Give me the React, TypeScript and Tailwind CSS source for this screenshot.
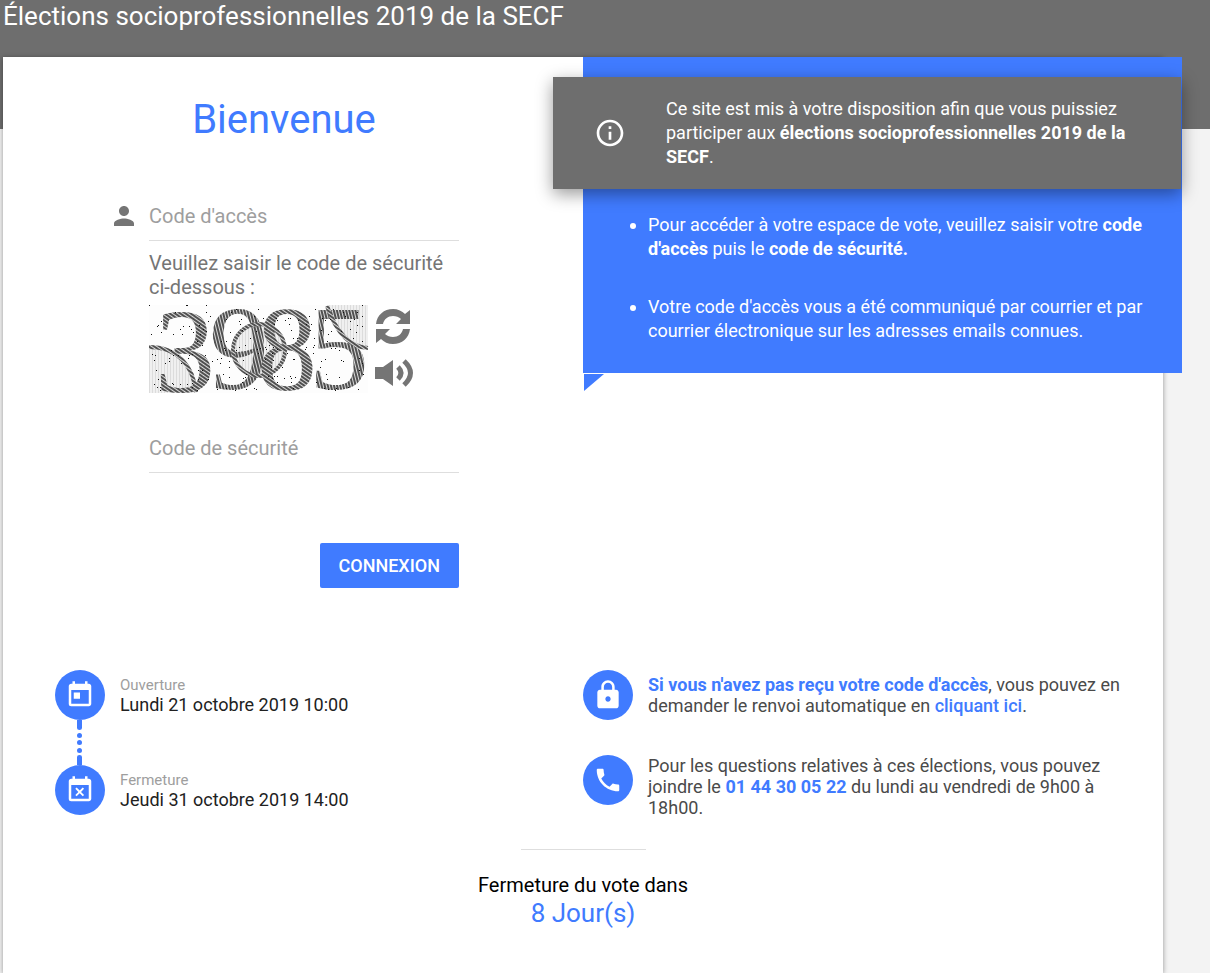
import React from "react";
import {
  MdPerson,
  MdInfoOutline,
  MdLock,
  MdPhone,
  MdToday,
  MdEventBusy,
} from "react-icons/md";

const specks = Array.from({ length: 190 }, (_, i) => ({
  x: (i * 83 + ((i * i * 7) % 41)) % 218,
  y: (i * 37 + ((i * i * 5) % 29)) % 87,
}));

function Captcha() {
  return (
    <svg
      viewBox="0 0 219 88"
      className="h-[88px] w-[219px] overflow-visible"
      role="img"
      aria-label="Code de sécurité en image"
    >
      <defs>
        <pattern id="slant" width="3" height="3" patternUnits="userSpaceOnUse" patternTransform="rotate(35)">
          <rect width="3" height="3" fill="#dadada" />
          <rect width="3" height="2" fill="#505050" />
        </pattern>
        <pattern id="upright" width="3" height="3" patternUnits="userSpaceOnUse" patternTransform="rotate(-14)">
          <rect width="3" height="3" fill="#dadada" />
          <rect width="2" height="3" fill="#505050" />
        </pattern>
        <pattern id="pale" width="3" height="3" patternUnits="userSpaceOnUse">
          <rect width="3" height="3" fill="#f0f0f0" />
          <rect width="1" height="3" fill="#dcdcdc" />
        </pattern>
      </defs>
      <rect width="219" height="88" fill="#fdfdfd" />
      <path d="M0 42C28 42 44 60 48 88H0Z" fill="url(#pale)" />
      <circle cx="110" cy="45" r="26" fill="url(#pale)" />
      <path d="M178 0H219V43C198 42 186 24 178 0Z" fill="url(#pale)" />
      <g fontFamily="Liberation Serif, serif" fontSize="120">
        <text x="6" y="87" fill="url(#slant)">3</text>
        <text x="60" y="84" fill="url(#upright)">9</text>
        <text x="108" y="85" fill="url(#slant)">8</text>
        <text x="160" y="84" fill="url(#upright)">5</text>
      </g>
      <g fill="none" stroke="url(#slant)" strokeWidth="4">
        <path d="M0 42C28 42 44 60 47 87" />
        <circle cx="110" cy="45" r="26" />
        <path d="M178 1C186 24 198 42 219 43" />
      </g>
      {specks.map((s, i) => (
        <rect key={i} x={s.x} y={s.y} width="1" height="1" fill="#111" />
      ))}
    </svg>
  );
}

function RefreshIcon() {
  return (
    <svg viewBox="0 0 36 36" className="h-9 w-9" fill="#757575">
      <path d="M1 15C2 6 9 0 18 0c5 0 9 2 12 5l5-4v14H21l5-5c-2-2-5-3-8-3-5 0-9 3-10 8Z" />
      <path d="M35 20c-1 9-8 15-17 15-5 0-9-2-12-5l-5 4V20h14l-5 5c2 2 5 3 8 3 5 0 9-3 10-8Z" />
    </svg>
  );
}

function SoundIcon() {
  return (
    <svg viewBox="0 0 38 30" className="h-[30px] w-[38px]" fill="#757575">
      <path d="M0 9h8L18 2v26L8 21H0Z" />
      <path d="M23 9q6 6 0 12M29 3q13 12 0 24" fill="none" stroke="#757575" strokeWidth="5" />
    </svg>
  );
}

function Badge({ children }: { children: React.ReactNode }) {
  return (
    <span className="flex size-[50px] shrink-0 items-center justify-center rounded-full bg-[#407bff] text-white">
      {children}
    </span>
  );
}

function DateRow({ icon, label, value }: { icon: React.ReactNode; label: string; value: string }) {
  return (
    <div className="flex items-center gap-[15px]">
      <Badge>{icon}</Badge>
      <div>
        <p className="text-[15px] leading-5 text-[#9e9e9e]">{label}</p>
        <p className="text-[18px] leading-5 text-[#212121]">{value}</p>
      </div>
    </div>
  );
}

export default function App() {
  return (
    <div className="min-h-screen bg-[#f3f3f3] font-[Roboto,sans-serif]">
      <header className="h-[129px] bg-[#6e6e6e] px-[3px]">
        <h1 className="text-[26px] leading-8 text-white">Élections socioprofessionnelles 2019 de la SECF</h1>
      </header>
      <main className="-mt-[72px] pr-[47px] pl-[3px]">
        <div className="min-h-[calc(100vh-57px)] bg-white pb-11 shadow-[0_1px_5px_rgba(0,0,0,0.4)]">
          <div className="grid grid-cols-2">
            <form className="ml-[106px] max-w-[350px] pt-9" onSubmit={(e) => e.preventDefault()}>
              <h2 className="text-center text-[40px] leading-[54px] text-[#407bff]">Bienvenue</h2>
              <div className="mt-[45px] flex">
                <label htmlFor="access" className="flex h-12 w-10 shrink-0 items-center" aria-label="Code d'accès">
                  <MdPerson className="size-[30px] text-[#757575]" />
                </label>
                <div className="min-w-0 flex-1">
                  <input
                    id="access"
                    type="text"
                    placeholder="Code d'accès"
                    className="h-[49px] w-full border-b border-[#dedede] text-[20px] text-[#424242] outline-none placeholder:text-[#9e9e9e]"
                  />
                  <p className="mt-2.5 text-[20px] leading-6 text-[#757575]">
                    Veuillez saisir le code de sécurité ci-dessous :
                  </p>
                  <div className="mt-1.5 flex gap-[7px]">
                    <Captcha />
                    <div className="flex flex-col gap-[13px] pt-1">
                      <button type="button" aria-label="Changer l'image">
                        <RefreshIcon />
                      </button>
                      <button type="button" aria-label="Écouter le code">
                        <SoundIcon />
                      </button>
                    </div>
                  </div>
                  <input
                    type="text"
                    aria-label="Code de sécurité"
                    placeholder="Code de sécurité"
                    className="mt-[31px] h-[49px] w-full border-b border-[#dedede] text-[20px] text-[#424242] outline-none placeholder:text-[#9e9e9e]"
                  />
                  <div className="mt-[70px] flex justify-end">
                    <button
                      type="submit"
                      className="h-[45px] rounded-[2px] bg-[#407bff] px-[19px] text-[18px] font-medium text-white"
                    >
                      CONNEXION
                    </button>
                  </div>
                </div>
              </div>
            </form>
            <section className="relative -mr-[19px] self-start bg-[#407bff] pt-5 pb-[30px] text-[18px] leading-6 text-white">
              <div className="mr-px -ml-[30px] flex items-center gap-10 bg-[#6e6e6e] py-5 pr-12 pl-[41px] shadow-[0_5px_16px_rgba(0,0,0,0.4)]">
                <MdInfoOutline className="size-8 shrink-0" />
                <p>
                  Ce site est mis à votre disposition afin que vous puissiez participer aux{" "}
                  <b>élections socioprofessionnelles 2019 de la SECF</b>.
                </p>
              </div>
              <ul className="mt-6 list-disc space-y-[34px] pr-9 pl-[65px]">
                <li>
                  Pour accéder à votre espace de vote, veuillez saisir votre <b>code d'accès</b> puis le{" "}
                  <b>code de sécurité.</b>
                </li>
                <li>
                  Votre code d'accès vous a été communiqué par courrier et par courrier électronique sur les adresses
                  emails connues.
                </li>
              </ul>
              <svg className="absolute top-full left-px mt-px h-[17px] w-5" viewBox="0 0 20 17" fill="#407bff">
                <path d="M0 0H20L0 17Z" />
              </svg>
            </section>
          </div>
          <div className="mt-[82px] grid grid-cols-2">
            <div className="pl-[52px]">
              <DateRow icon={<MdToday className="size-[30px]" />} label="Ouverture" value="Lundi 21 octobre 2019 10:00" />
              <svg className="ml-[22px] h-[45px] w-[5px]" viewBox="0 0 5 45" fill="#407bff">
                <path d="M0 0H5V8Q5 10 2.5 10T0 8ZM0 45H5V37Q5 35 2.5 35T0 37Z" />
                <circle cx="2.5" cy="15.5" r="2.5" />
                <circle cx="2.5" cy="22.5" r="2.5" />
                <circle cx="2.5" cy="30.5" r="2.5" />
              </svg>
              <DateRow icon={<MdEventBusy className="size-[30px]" />} label="Fermeture" value="Jeudi 31 octobre 2019 14:00" />
            </div>
            <div className="flex flex-col gap-[35px] pr-9 text-[18px] leading-[21px] text-[#4a4a4a]">
              <div className="flex gap-[15px]">
                <Badge>
                  <MdLock className="size-8" />
                </Badge>
                <p className="pt-1">
                  <b className="text-[#407bff]">Si vous n'avez pas reçu votre code d'accès</b>, vous pouvez en demander le
                  renvoi automatique en{" "}
                  <a href="#" className="font-medium text-[#407bff]">
                    cliquant ici
                  </a>
                  .
                </p>
              </div>
              <div className="flex gap-[15px]">
                <Badge>
                  <MdPhone className="size-[30px]" />
                </Badge>
                <p>
                  Pour les questions relatives à ces élections, vous pouvez joindre le{" "}
                  <b className="text-[#407bff]">01 44 30 05 22</b> du lundi au vendredi de 9h00 à 18h00.
                </p>
              </div>
            </div>
          </div>
          <div className="mt-[31px] flex flex-col items-center">
            <hr className="w-[125px] border-[#dedede]" />
            <p className="mt-[23px] text-[20px] leading-6 text-black">Fermeture du vote dans</p>
            <p className="text-[26px] leading-8 text-[#407bff]">8 Jour(s)</p>
          </div>
        </div>
      </main>
    </div>
  );
}
